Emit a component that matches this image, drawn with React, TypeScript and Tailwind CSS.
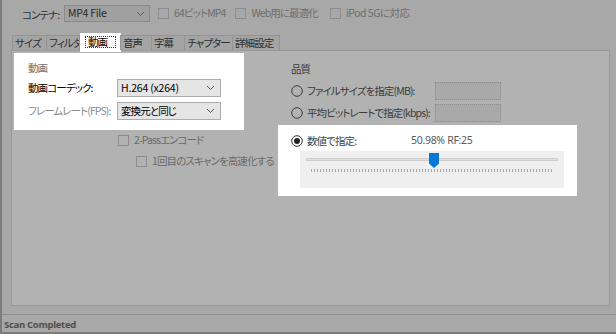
import React from 'react';

const jp = "[font-family:'Noto_Sans_CJK_JP','Noto_Sans',sans-serif] [font-feature-settings:'palt']";

const Check = ({ light }: { light?: boolean }) => (
  <span className={`inline-block shrink-0 w-[11px] h-[11px] border ${light ? 'border-[#8c8c8c]' : 'border-[#5a5a5a]'} bg-transparent`} />
);

const Radio = ({ on, white }: { on?: boolean; white?: boolean }) => (
  <svg width="12" height="12" viewBox="0 0 12 12" className="shrink-0">
    <circle cx="6" cy="6" r="5.3" fill="none" stroke={white ? '#333' : '#3c3c3c'} strokeWidth="1" />
    {on && <circle cx="6" cy="6" r="3" fill="#222" />}
  </svg>
);

const Chevron = ({ color }: { color: string }) => (
  <svg width="9" height="6" viewBox="0 0 9 6">
    <path d="M1 1 L4.5 4.5 L8 1" fill="none" stroke={color} strokeWidth="1" />
  </svg>
);

const Select = ({ text, latin }: { text: string; latin?: boolean }) => (
  <div className="w-[104px] h-[18px] bg-[#e5e5e5] border border-[#adadad] flex items-center justify-between pl-[3px] pr-[5px]">
    <span className={`text-black leading-none ${latin ? 'tracking-[-0.2px]' : ''}`}>{text}</span>
    <Chevron color="#555" />
  </div>
);

const tabs = [
  { label: 'サイズ', w: 34 },
  { label: 'フィルタ', w: 33 },
  { label: '動画', w: 41, active: true },
  { label: '音声', w: 31 },
  { label: '字幕', w: 33 },
  { label: 'チャプター', w: 48 },
  { label: '詳細設定', w: 47 },
];

export default function App() {
  return (
    <div className={`w-[616px] h-[334px] bg-[#a8a8a8] border-l-2 border-b-2 border-[#7c7c7c] flex flex-col text-[10.5px] tracking-[-0.9px] whitespace-nowrap ${jp} overflow-hidden`}>
      {/* top row */}
      <div className="h-[33px] flex items-start pt-[5px] pl-[20px] text-[#333]">
        <span className="mt-[2px] w-[42px]">コンテナ:</span>
        <div className="w-[86px] h-[17px] bg-[#a0a0a0] border border-[#8a8a8a] flex items-center justify-between pl-[3px] pr-[4px]">
          <span className="text-[#2a2a2a] leading-none tracking-[-0.3px]">MP4 File</span>
          <Chevron color="#5a5a5a" />
        </div>
        <div className="flex items-center gap-[5px] ml-[8px] mt-[3px] text-[#6e6e6e]">
          <Check light />
          <span className="leading-none">64ビットMP4</span>
        </div>
        <div className="flex items-center gap-[5px] ml-[10px] mt-[3px] text-[#6e6e6e]">
          <Check light />
          <span className="leading-none">Web用に最適化</span>
        </div>
        <div className="flex items-center gap-[5px] ml-[12px] mt-[3px] text-[#6e6e6e]">
          <Check light />
          <span className="leading-none tracking-[-0.5px]">iPod 5Gに対応</span>
        </div>
      </div>

      {/* tabs */}
      <div className="flex items-end h-[17px] pl-[11px] relative z-10">
        {tabs.map((t) =>
          t.active ? (
            <div key={t.label} className="bg-white h-[19px] flex items-start pt-[3px] px-[5px] -mb-[2px]" style={{ width: t.w }}>
              <div className="border border-dotted border-[#333] w-full h-[12px] flex items-center px-[2px] text-black leading-none">
                {t.label}
              </div>
            </div>
          ) : (
            <div
              key={t.label}
              className="h-[15px] border border-b-0 border-[#949494] -ml-px flex items-center pl-[2px] text-[#2e2e2e] leading-none bg-[#a4a4a4] overflow-hidden"
              style={{ width: t.w + 1 }}
            >
              {t.label}
            </div>
          )
        )}
      </div>

      {/* panel */}
      <div className="ml-[9px] w-[599px] h-[256px] bg-[#b2b2b2] border border-[#999] flex items-start pt-[2px] pl-[2px]">
        {/* left column */}
        <div className="w-[264px] shrink-0">
          <div className="w-[230px] h-[77px] bg-white pl-[14px] pt-[8px]">
            <div className="text-[#707070] leading-[14px]">動画</div>
            <div className="flex items-center mt-[4px]">
              <span className="w-[89px] text-black">動画コーデック:</span>
              <Select text="H.264 (x264)" latin />
            </div>
            <div className="flex items-center mt-[5px]">
              <span className="w-[89px] text-[#8a8a8a]">フレームレート(FPS):</span>
              <Select text="変換元と同じ" />
            </div>
          </div>
          <div className="flex items-center gap-[5px] ml-[104px] mt-[3px] text-[#6a6a6a] h-[14px]">
            <Check light />
            <span className="leading-none">2-Passエンコード</span>
          </div>
          <div className="flex items-center gap-[5px] ml-[122px] mt-[7px] text-[#6a6a6a] h-[14px]">
            <Check light />
            <span className="leading-none">1回目のスキャンを高速化する</span>
          </div>
        </div>

        {/* right column */}
        <div className="flex-1 pt-[9px]">
          <div className="pl-[13px] text-[#3a3a3a] leading-[14px]">品質</div>
          <div className="pl-[13px] mt-[6px] flex items-center h-[18px]">
            <Radio />
            <span className="ml-[4px] w-[128px] text-[#3a3a3a]">ファイルサイズを指定(MB):</span>
            <div className="w-[66px] h-[18px] border border-dotted border-[#8c8c8c] bg-[#a9a9a9]" />
          </div>
          <div className="pl-[13px] mt-[4px] flex items-center h-[18px]">
            <Radio />
            <span className="ml-[4px] w-[128px] text-[#3a3a3a]">平均ビットレートで指定(kbps):</span>
            <div className="w-[66px] h-[18px] border border-dotted border-[#8c8c8c] bg-[#a9a9a9]" />
          </div>
          <div className="mt-[3px] w-[299px] h-[71px] bg-white pt-[9px]">
            <div className="pl-[13px] flex items-center h-[13px]">
              <Radio on white />
              <span className="ml-[4px] w-[104px] text-[#444]">数値で指定:</span>
              <span className="text-[#5a5a5a] tracking-[-0.3px] [font-family:'Noto_Sans',sans-serif]">50.98% RF:25</span>
            </div>
            <div className="ml-[22px] mt-[4px] w-[264px] h-[37px] bg-[#efefef] relative">
              <div className="absolute left-[6px] right-[6px] top-[7px] h-[3px] bg-[#e2e2e2] border border-[#cdcdcd]" />
              <div className="absolute left-[11px] right-[10px] top-[18px] h-[3px] bg-[repeating-linear-gradient(90deg,#a6a6a6_0_1px,transparent_1px_3px)]" />
              <svg className="absolute left-[129px] top-[2px]" width="10" height="15" viewBox="0 0 10 15">
                <path d="M0 0 H10 V10.5 L5 15 L0 10.5 Z" fill="#0078d7" />
              </svg>
            </div>
          </div>
        </div>
      </div>

      {/* status bar */}
      <div className="mt-[8px] border-t border-[#8e8e8e]" />
      <div className="pl-[2px] pt-[3px] text-[#4e4e4e] font-bold text-[9.5px] leading-[13px] [font-family:'Open_Sans',sans-serif] tracking-[-0.3px]">
        Scan Completed
      </div>
    </div>
  );
}
